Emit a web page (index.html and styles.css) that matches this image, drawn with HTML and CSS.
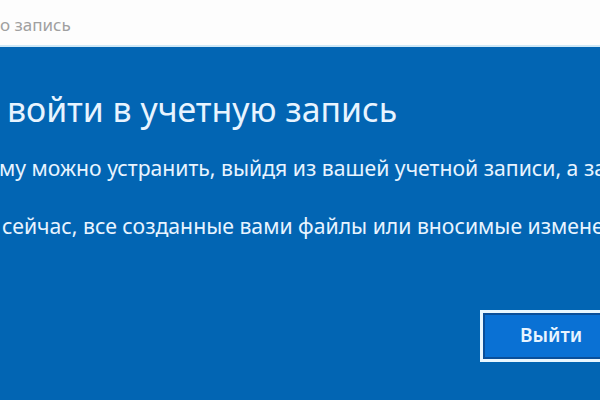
FILE: index.html
```html
<!DOCTYPE html>
<html lang="ru">
<head>
<meta charset="utf-8">
<title>Выйти</title>
<link rel="stylesheet" href="styles.css">
</head>
<body>
<div class="titlebar"><span class="titlebar-text">о запись</span></div>
<main class="panel">
  <h1 class="heading">войти в учетную запись</h1>
  <p class="line line-first">му можно устранить, выйдя из вашей учетной записи, а за</p>
  <p class="line line-second">сейчас, все созданные вами файлы или вносимые измене</p>
  <div class="actions">
    <button class="btn">Выйти</button>
  </div>
</main>
</body>
</html>
```
FILE: styles.css
```css
html, body {
  margin: 0;
  padding: 0;
  width: 600px;
  height: 400px;
  overflow: hidden;
  font-family: "Noto Sans", "Open Sans", sans-serif;
}
.titlebar {
  height: 45px;
  background: #fdfdfd;
  border-bottom: 2px solid #cfe8f6;
  display: flex;
  align-items: center;
  padding-left: 0;
  box-sizing: content-box;
}
.titlebar-text {
  font-size: 17px;
  color: #a0a0a0;
  margin-top: 4px;
}
.panel {
  height: 353px;
  background: #0265b3;
  color: #e8f4ff;
  display: flex;
  flex-direction: column;
  overflow: hidden;
}
.heading {
  margin: 0;
  padding: 40px 0 0 7px;
  font-size: 33.8px;
  font-weight: 400;
  line-height: 44px;
  white-space: nowrap;
}
.line {
  margin: 0;
  font-size: 21.2px;
  line-height: 28px;
  white-space: nowrap;
  overflow: hidden;
}
.line-first {
  padding-top: 23px;
  margin-left: -1px;
}
.line-second {
  padding-top: 30px;
  padding-left: 2px;
}
.actions {
  display: flex;
  justify-content: flex-start;
  padding-left: 480px;
  padding-top: 70px;
}
.btn {
  width: 150px;
  height: 52px;
  flex-shrink: 0;
  background: #0a71d4;
  border: 3px solid #e9f7ff;
  box-shadow: inset 0 0 0 2px #0a4f9a;
  color: #e8f4ff;
  font-family: inherit;
  font-size: 19px;
  font-weight: 600;
  text-align: left;
  padding: 0 0 2px 37px;
}
```
